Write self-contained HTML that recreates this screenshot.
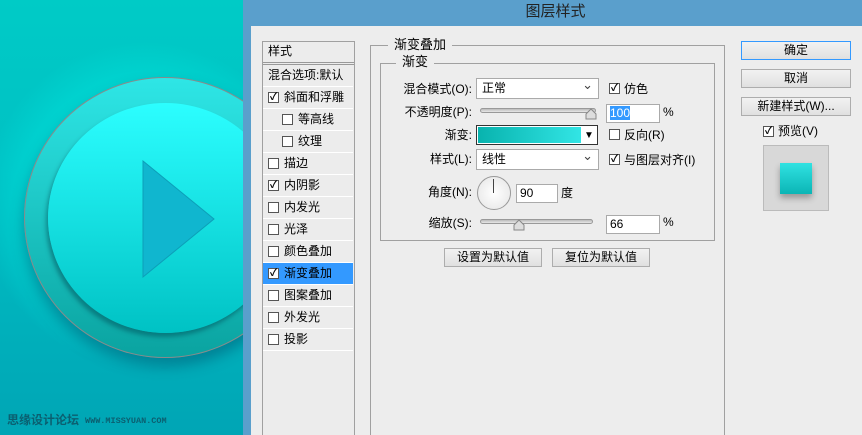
<!DOCTYPE html>
<html><head><meta charset="utf-8"><style>
*{margin:0;padding:0;box-sizing:border-box}
html,body{width:862px;height:435px;overflow:hidden}
body{position:relative;font-family:"Liberation Sans","Noto Sans CJK SC",sans-serif;font-size:12px;color:#000;background:#00a8b8}
.a{position:absolute}
.cb{position:absolute;width:11px;height:11px;border:1px solid #555;background:#fff;font-size:10px;line-height:9px;text-align:center;font-weight:bold}
.row{position:absolute;left:263px;width:90px;height:22px;border-bottom:1px solid #fff;line-height:21px}
.btn{position:absolute;border:1px solid #adadad;background:linear-gradient(#f2f2f2,#e0e0e0);text-align:center;line-height:17px;font-size:12px}
.inp{position:absolute;background:#fff;border:1px solid #aaa;height:19px;line-height:17px;padding-left:3px}
.lbl{position:absolute;text-align:right;width:120px;line-height:18px}
.sel{position:absolute;background:#fff;border:1px solid #aaa;height:21px;line-height:19px;padding-left:5px}
.sel:after{content:"⌄";position:absolute;right:5px;top:-4px;font-size:13px;color:#444}
.track{position:absolute;height:5px;border:1px solid #999;border-radius:3px;background:linear-gradient(#bbb,#e8e8e8)}
</style></head><body>
<div class="a" style="left:0;top:0;width:243px;height:435px;background:linear-gradient(#00cbc6 0%,#00c0c4 40%,#00a5b5 100%)"></div>
<div class="a" style="left:-20px;top:40px;width:330px;height:330px;border-radius:50%;background:radial-gradient(circle,rgba(0,240,230,.6) 40%,rgba(0,220,220,0) 70%)"></div>
<div class="a" style="left:24px;top:77px;width:282px;height:281px;border-radius:50%;background:linear-gradient(#2ee6e6,#0aa3a0);border:1px solid #8a8a8a;box-shadow:0 8px 14px rgba(0,70,100,.45)"></div>
<div class="a" style="left:48px;top:103px;width:235px;height:230px;border-radius:50%;background:linear-gradient(#2cfeff,#00c2c4);box-shadow:-2px 4px 4px rgba(0,80,90,.5)"></div>
<svg class="a" style="left:0;top:0" width="243" height="435"><polygon points="143,161 214,219 143,277" fill="#10b6cf" stroke="#0c9fb8"/>
<text x="7" y="424" font-size="12" fill="#0b5f70" font-family="Noto Sans CJK SC" font-weight="bold">思缘设计论坛</text><text x="85" y="423" font-size="8.5" fill="#0b5f70" font-family="Liberation Mono" font-weight="bold">WWW.MISSYUAN.COM</text></svg>
<div class="a" style="left:243px;top:0;width:619px;height:435px;background:#5a9fcc"></div>
<div class="a" style="left:243px;width:619px;top:2px;text-align:center;font-size:15px;color:#222;line-height:20px;padding-left:6px">图层样式</div>
<div class="a" style="left:251px;top:26px;width:611px;height:409px;background:#ededed"></div>
<div class="a" style="left:262px;top:41px;width:93px;height:394px;border:1px solid #a0a0a0;border-bottom:none;background:#ececec"></div>
<div class="a" style="left:268px;top:42px;line-height:18px">样式</div>
<div class="a" style="left:263px;top:62px;width:91px;height:3px;border-top:1px solid #999;border-bottom:1px solid #999"></div>
<div class="row" style="top:65px;padding-left:5px">混合选项:默认</div>
<div class="row" style="top:87px"><span class="cb" style="left:5px;top:5px">✓</span><span class="a" style="left:21px">斜面和浮雕</span></div>
<div class="row" style="top:109px"><span class="cb" style="left:19px;top:5px"></span><span class="a" style="left:35px">等高线</span></div>
<div class="row" style="top:131px"><span class="cb" style="left:19px;top:5px"></span><span class="a" style="left:35px">纹理</span></div>
<div class="row" style="top:153px"><span class="cb" style="left:5px;top:5px"></span><span class="a" style="left:21px">描边</span></div>
<div class="row" style="top:175px"><span class="cb" style="left:5px;top:5px">✓</span><span class="a" style="left:21px">内阴影</span></div>
<div class="row" style="top:197px"><span class="cb" style="left:5px;top:5px"></span><span class="a" style="left:21px">内发光</span></div>
<div class="row" style="top:219px"><span class="cb" style="left:5px;top:5px"></span><span class="a" style="left:21px">光泽</span></div>
<div class="row" style="top:241px"><span class="cb" style="left:5px;top:5px"></span><span class="a" style="left:21px">颜色叠加</span></div>
<div class="row" style="top:263px;background:#3399ff"><span class="cb" style="left:5px;top:5px">✓</span><span class="a" style="left:21px">渐变叠加</span></div>
<div class="row" style="top:285px"><span class="cb" style="left:5px;top:5px"></span><span class="a" style="left:21px">图案叠加</span></div>
<div class="row" style="top:307px"><span class="cb" style="left:5px;top:5px"></span><span class="a" style="left:21px">外发光</span></div>
<div class="row" style="top:329px"><span class="cb" style="left:5px;top:5px"></span><span class="a" style="left:21px">投影</span></div>
<div class="a" style="left:370px;top:45px;width:355px;height:395px;border:1px solid #a0a0a0"></div>
<div class="a" style="left:388px;top:36px;background:#ededed;padding:0 6px;font-size:13px;line-height:18px">渐变叠加</div>
<div class="a" style="left:380px;top:63px;width:335px;height:178px;border:1px solid #a0a0a0"></div>
<div class="a" style="left:396px;top:53px;background:#ededed;padding:0 6px;font-size:13px;line-height:18px">渐变</div>
<div class="lbl" style="left:352px;top:80px">混合模式(O):</div>
<div class="sel" style="left:476px;top:78px;width:123px">正常</div>
<div class="cb" style="left:609px;top:83px">✓</div><div class="a" style="left:624px;top:80px;line-height:18px">仿色</div>
<div class="lbl" style="left:352px;top:103px">不透明度(P):</div>
<div class="track" style="left:480px;top:108px;width:116px"></div>
<svg class="a" style="left:585px;top:108px" width="12" height="12"><path d="M1,11V6L6,1L11,6V11Z" fill="#ddd" stroke="#888"/></svg>
<div class="inp" style="left:606px;top:104px;width:54px"><span style="background:#3399ff;color:#fff">100</span></div>
<div class="a" style="left:663px;top:105px">%</div>
<div class="lbl" style="left:352px;top:126px">渐变:</div>
<div class="a" style="left:476px;top:125px;width:122px;height:20px;border:1px solid #333;background:#fff"></div>
<div class="a" style="left:478px;top:127px;width:103px;height:16px;background:linear-gradient(90deg,#08b3ae,#32e5e5)"></div>
<div class="a" style="left:584px;top:130px;font-size:10px">▼</div>
<div class="cb" style="left:609px;top:129px"></div><div class="a" style="left:624px;top:126px;line-height:18px">反向(R)</div>
<div class="lbl" style="left:352px;top:150px">样式(L):</div>
<div class="sel" style="left:476px;top:149px;width:123px">线性</div>
<div class="cb" style="left:609px;top:154px">✓</div><div class="a" style="left:624px;top:151px;line-height:18px">与图层对齐(I)</div>
<div class="lbl" style="left:352px;top:183px">角度(N):</div>
<div class="a" style="left:477px;top:176px;width:34px;height:34px;border-radius:50%;border:1px solid #999;background:radial-gradient(#fff,#e4e4e4)"></div>
<div class="a" style="left:493px;top:179px;width:1px;height:14px;background:#444"></div>
<div class="inp" style="left:516px;top:184px;width:42px">90</div>
<div class="a" style="left:561px;top:184px;line-height:18px">度</div>
<div class="lbl" style="left:352px;top:214px">缩放(S):</div>
<div class="track" style="left:480px;top:219px;width:113px"></div>
<svg class="a" style="left:513px;top:219px" width="12" height="12"><path d="M1,11V6L6,1L11,6V11Z" fill="#ddd" stroke="#888"/></svg>
<div class="inp" style="left:606px;top:215px;width:54px">66</div>
<div class="a" style="left:663px;top:215px">%</div>
<div class="btn" style="left:444px;top:248px;width:98px">设置为默认值</div>
<div class="btn" style="left:552px;top:248px;width:98px">复位为默认值</div>
<div class="btn" style="left:741px;top:41px;width:110px;border-color:#3399ff">确定</div>
<div class="btn" style="left:741px;top:69px;width:110px">取消</div>
<div class="btn" style="left:741px;top:97px;width:110px">新建样式(W)...</div>
<div class="cb" style="left:763px;top:126px">✓</div><div class="a" style="left:778px;top:122px;line-height:18px">预览(V)</div>
<div class="a" style="left:763px;top:145px;width:66px;height:66px;border:1px solid #bbb;background:#d8d8d8"></div>
<div class="a" style="left:780px;top:163px;width:32px;height:31px;background:linear-gradient(#30e2e2,#0bb5b5);box-shadow:0 4px 6px rgba(0,0,0,.3)"></div>
</body></html>
